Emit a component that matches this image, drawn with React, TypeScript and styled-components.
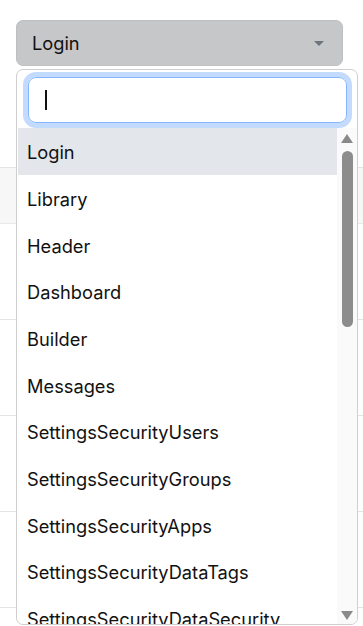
import { FC } from 'react'
import styled, { createGlobalStyle } from 'styled-components'

const GlobalStyle = createGlobalStyle`
  html, body {
    margin: 0;
    padding: 0;
    background: #ffffff;
    overflow: hidden;
  }
  body {
    font-family: Inter, "Noto Sans", "Liberation Sans", sans-serif;
    color: #212529;
  }
`

const Page = styled.div`
  position: relative;
  height: 626px;
  padding-top: 20px;
  box-sizing: border-box;
`

const SelectWrap = styled.div`
  position: relative;
  margin-left: 16px;
  width: 327px;
  z-index: 2;
`

const Trigger = styled.div`
  height: 46px;
  box-sizing: border-box;
  display: flex;
  align-items: center;
  justify-content: space-between;
  padding: 0 18px 0 15px;
  background: #c6c7c9;
  border: 1px solid #bebfc1;
  border-radius: 7px;
  font-size: 18.25px;
  color: #111;
`

const Caret = styled.span`
  width: 0;
  height: 0;
  border-left: 5.5px solid transparent;
  border-right: 5.5px solid transparent;
  border-top: 5.5px solid #6c757d;
`

const Menu = styled.div`
  position: absolute;
  top: 49px;
  left: 0;
  width: 342px;
  height: 556px;
  box-sizing: border-box;
  background: #ffffff;
  border: 1px solid #cfcfcf;
  border-radius: 7px;
  overflow: hidden;
  display: flex;
  flex-direction: column;
`

const SearchRow = styled.div`
  padding: 7px 10px 5px 11px;
`

const Search = styled.div`
  height: 46px;
  box-sizing: border-box;
  border: 1.3px solid #86b7fe;
  border-radius: 8px;
  box-shadow: 0 0 0 5px rgba(13, 110, 253, 0.25);
  display: flex;
  align-items: center;
  padding-left: 16px;
`

const Cursor = styled.span`
  width: 1.5px;
  height: 20px;
  background: #111;
`

const ListArea = styled.div`
  flex: 1;
  display: flex;
  min-height: 0;
  padding-left: 1px;
`

const List = styled.ul`
  flex: 1;
  margin: 0;
  padding: 0;
  list-style: none;
  overflow: hidden;
`

const Option = styled.li<{ $active?: boolean }>`
  height: 46.67px;
  box-sizing: border-box;
  display: flex;
  align-items: center;
  padding: 2px 0 0 9px;
  font-size: 18.25px;
  color: #111;
  white-space: nowrap;
  background: ${(p) => (p.$active ? '#e3e6ea' : 'transparent')};
`

const ScrollTrack = styled.div`
  width: 20px;
  background: #fafafa;
  display: flex;
  flex-direction: column;
  align-items: center;
  padding-top: 6px;
  padding-bottom: 4px;
  box-sizing: border-box;
`

const Thumb = styled.div`
  width: 11px;
  height: 176px;
  margin-top: 8px;
  background: #8c8c8c;
  border-radius: 6px;
`

const Spacer = styled.div`
  flex: 1;
`

const Table = styled.div`
  margin-top: 101px;
  border-top: 1px solid #e4e4e4;
`

const HeadRow = styled.div`
  height: 55px;
  background: #f7f7f7;
  border-bottom: 1px solid #e9e9e9;
`

const BodyRow = styled.div`
  height: 95px;
  border-bottom: 1px solid #e4e4e4;
`

const Arrow: FC<{ down?: boolean }> = ({ down }) => (
  <svg width="12" height="9" viewBox="0 0 12 9" style={{ display: 'block' }}>
    <path d={down ? 'M0 0 L12 0 L6 9 Z' : 'M6 0 L12 9 L0 9 Z'} fill="#8a8a8a" />
  </svg>
)

const options = [
  'Login',
  'Library',
  'Header',
  'Dashboard',
  'Builder',
  'Messages',
  'SettingsSecurityUsers',
  'SettingsSecurityGroups',
  'SettingsSecurityApps',
  'SettingsSecurityDataTags',
  'SettingsSecurityDataSecurity',
]

const App = () => {
  return (
    <Page>
      <GlobalStyle />
      <SelectWrap>
        <Trigger>
          <span>Login</span>
          <Caret />
        </Trigger>
        <Menu>
          <SearchRow>
            <Search>
              <Cursor />
            </Search>
          </SearchRow>
          <ListArea>
            <List>
              {options.map((o, i) => (
                <Option key={o} $active={i === 0}>
                  {o}
                </Option>
              ))}
            </List>
            <ScrollTrack>
              <Arrow />
              <Thumb />
              <Spacer />
              <Arrow down />
            </ScrollTrack>
          </ListArea>
        </Menu>
      </SelectWrap>
      <Table>
        <HeadRow />
        <BodyRow />
        <BodyRow />
        <BodyRow />
        <BodyRow />
      </Table>
    </Page>
  )
}

export default App
